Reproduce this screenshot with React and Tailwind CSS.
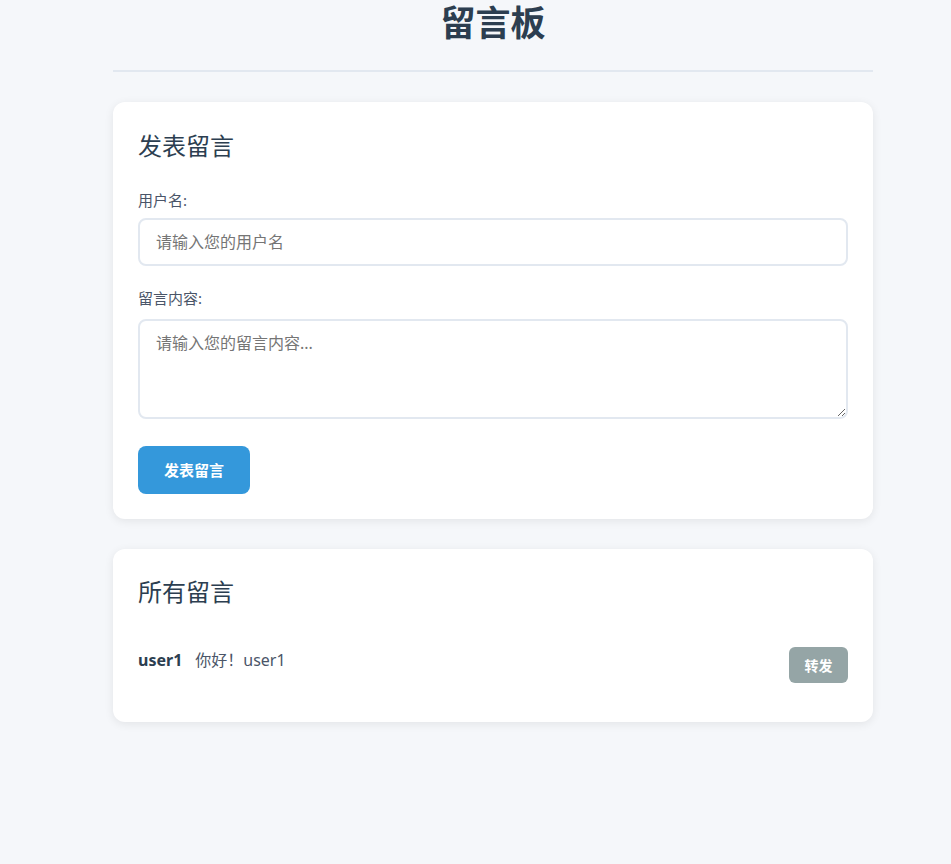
export default function App() {
  return (
    <div
      className="min-h-[864px] w-full bg-[#f5f7fa] text-[#2c3e50]"
      style={{ fontFamily: '"Noto Sans", "Noto Sans CJK SC", sans-serif' }}
    >
      <div className="ml-[113px] w-[760px]">
        <h1 className="text-center text-[35px] font-bold leading-[46px] text-[#2c3e50] pb-[24px] border-b-2 border-[#e2e8f0]">
          留言板
        </h1>
        <div className="mt-[30px] rounded-[12px] bg-white shadow-[0_2px_10px_rgba(0,0,0,0.08)] p-[25px]">
          <h2 className="text-[24px] leading-[40px] font-normal -mt-[1px] text-[#2c3e50]">发表留言</h2>
          <div className="mt-[24px]">
            <label className="block text-[15px] leading-[20px] text-[#4a5568]">用户名:</label>
            <input
              className="mt-[8px] block w-full h-[48px] rounded-[8px] border-2 border-[#e2e8f0] px-[16px] text-[16px] outline-none placeholder:text-[#757575]"
              placeholder="请输入您的用户名"
            />
          </div>
          <div className="mt-[22px]">
            <label className="block text-[15px] leading-[20px] text-[#4a5568]">留言内容:</label>
            <textarea
              className="mt-[11px] block w-full h-[100px] rounded-[8px] border-2 border-[#e2e8f0] px-[16px] py-[10px] text-[16px] outline-none placeholder:text-[#757575]"
              placeholder="请输入您的留言内容..."
            />
          </div>
          <button className="mt-[27px] h-[48px] w-[112px] rounded-[8px] bg-[#3498db] text-white text-[15px] font-bold">
            发表留言
          </button>
        </div>
        <div className="mt-[30px] rounded-[12px] bg-white shadow-[0_2px_10px_rgba(0,0,0,0.08)] px-[25px] pt-[25px] pb-[39px]">
          <h2 className="text-[24px] leading-[40px] font-normal -mt-[2px] text-[#2c3e50]">所有留言</h2>
          <div className="mt-[35px] flex items-start justify-between">
            <div className="flex items-center pt-[1px] text-[16px] leading-[24px]">
              <span className="font-bold text-[#2c3e50]">user1</span>
              <span className="ml-[13px] text-[#4a5568]">你好！user1</span>
            </div>
            <button className="h-[36px] w-[59px] rounded-[6px] bg-[#95a5a6] text-white text-[14px] font-bold">
              转发
            </button>
          </div>
        </div>
      </div>
    </div>
  );
}
